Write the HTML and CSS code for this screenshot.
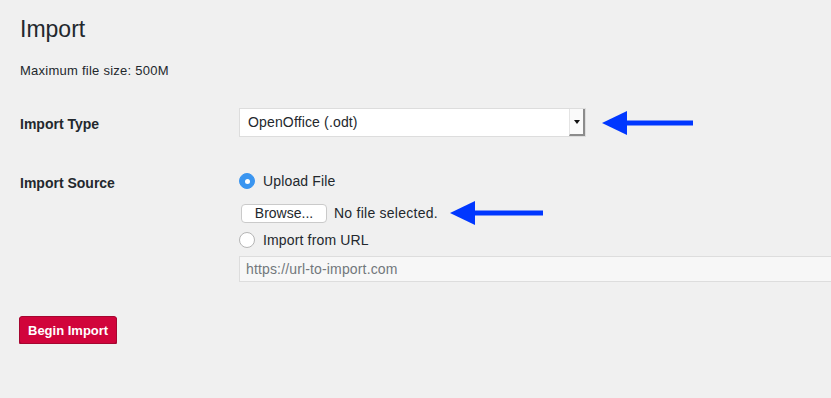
FILE: index.html
```html
<!DOCTYPE html>
<html lang="en">
<head>
<meta charset="UTF-8">
<title>Import</title>
<link rel="stylesheet" href="styles.css">
</head>
<body>
<div class="wrap">
  <h1>Import</h1>
  <p class="desc">Maximum file size: 500M</p>

  <div class="row row-type">
    <div class="label">Import Type</div>
    <div class="field inline">
      <div class="select">
        <span class="select-val">OpenOffice (.odt)</span>
        <span class="select-btn"><span class="caret"></span></span>
      </div>
      <svg class="arrow" width="92" height="24" viewBox="0 0 92 24"><polygon points="0,12 25,0 25,24" fill="#0037ff"/><rect x="24" y="9.5" width="67" height="5" fill="#0037ff"/></svg>
    </div>
  </div>

  <div class="row row-source">
    <div class="label label-source">Import Source</div>
    <div class="field">
      <div class="opt"><span class="radio on"></span>Upload File</div>
      <div class="opt opt-file">
        <span class="browse">Browse...</span>
        <span class="nofile">No file selected.</span>
        <svg class="arrow arrow2" width="94" height="24" viewBox="0 0 94 24"><polygon points="0,12 25,0 25,24" fill="#0037ff"/><rect x="24" y="9.5" width="69" height="5" fill="#0037ff"/></svg>
      </div>
      <div class="opt opt-url"><span class="radio"></span>Import from URL</div>
      <div class="url">https://url-to-import.com</div>
    </div>
  </div>

  <button class="go">Begin Import</button>
</div>
</body>
</html>
```

FILE: styles.css
```css
*{box-sizing:border-box}
html,body{margin:0;background:#f0f0f0;color:#23282d;font-family:"Liberation Sans",Arial,sans-serif;overflow:hidden}

.wrap{padding:15px 0 0 20px}

/* ---------- Head ---------- */
h1{margin:0;font-size:23px;line-height:29px;font-weight:400}
.desc{margin:18px 0 0;font-size:13px;line-height:18px;letter-spacing:.25px}

/* ---------- Rows ---------- */
.row{display:grid;grid-template-columns:219px 1fr}
.row-type{margin-top:28px}
.row-source{margin-top:34px}
.label{font-size:14px;line-height:20px;font-weight:700;padding-top:6px}
.label-source{padding-top:2px}
.inline{display:flex;align-items:center}

/* ---------- Select ---------- */
.select{width:347px;height:29px;display:flex;align-items:stretch;background:#fff;border:1px solid #ddd}
.select-val{flex:1;padding-left:8px;font-size:14px;line-height:27px;letter-spacing:.15px}
.select-btn{width:16px;display:flex;align-items:center;justify-content:center;border-left:1px solid #e4e4e4;border-right:2px solid #8c8c8c;border-bottom:2px solid #8c8c8c;background:#fafafa}
.caret{width:0;height:0;border-left:3px solid transparent;border-right:3px solid transparent;border-top:4px solid #111}
.arrow{display:block;margin-left:16px}

/* ---------- Options ---------- */
.opt{display:flex;align-items:center;font-size:14px;line-height:20px;height:20px;letter-spacing:.15px}
.radio{width:16px;height:16px;border-radius:50%;margin:0 8px 0 0;background:#fff;border:1px solid #b5b5b5;display:flex;align-items:center;justify-content:center}
.radio.on{background:#3a95f0;border-color:#3a95f0}
.radio.on::after{content:"";width:5px;height:5px;border-radius:50%;background:#fff}
.opt-file{margin-top:12px;height:20px}
.browse{display:inline-block;width:86px;height:19px;margin-left:2px;text-align:center;line-height:17px;letter-spacing:0;background:#fff;border:1px solid #cacaca;border-radius:4px}
.nofile{margin-left:7px;letter-spacing:.25px}
.arrow2{margin-left:12px}
.opt-url{margin-top:7px}
.url{margin-top:6px;height:26px;margin-right:-10px;padding-left:6px;font-size:14px;line-height:24px;letter-spacing:.15px;color:#72777c;background:#f7f7f7;border:1px solid #ddd}

/* ---------- Button ---------- */
.go{display:block;margin:34px 0 0 -1px;height:28px;padding:0 8px;font-family:inherit;font-size:13px;font-weight:700;color:#fff;background:#d1043b;border:1px solid #a50630;border-radius:3px;box-shadow:0 1px 0 #a50630}
```
